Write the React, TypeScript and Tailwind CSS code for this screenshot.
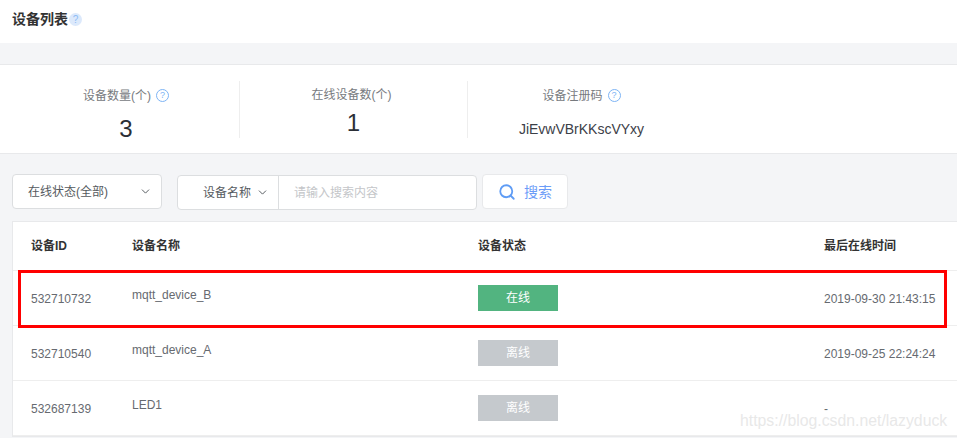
import React from 'react';
import { ChevronDown, Search } from 'lucide-react';

const rows = [
  { id: '532710732', name: 'mqtt_device_B', online: true, time: '2019-09-30 21:43:15' },
  { id: '532710540', name: 'mqtt_device_A', online: false, time: '2019-09-25 22:24:24' },
  { id: '532687139', name: 'LED1', online: false, time: '-' },
];

function Help() {
  return (
    <span className="flex h-[13px] w-[13px] items-center justify-center rounded-full border border-[#7db4f5] text-[9px] leading-none text-[#7db4f5]">
      ?
    </span>
  );
}

function Row({ id, name, online, time }: { id: string; name: string; online: boolean; time: string }) {
  return (
    <div className="flex h-[55px] items-center border-b border-[#eeeeee] pl-[18px] text-xs text-[#666a70]">
      <div className="w-[101px] pt-[2px]">{id}</div>
      <div className="w-[346px] pb-[7px]">{name}</div>
      <div className="w-[346px]">
        <div className={`flex h-[26px] w-20 items-center justify-center text-xs text-white ${online ? 'bg-[#52b480]' : 'bg-[#c5c9cd]'}`}>
          {online ? '在线' : '离线'}
        </div>
      </div>
      <div className="pt-[2px] whitespace-nowrap">{time}</div>
    </div>
  );
}

export default function App() {
  return (
    <div
      className="relative h-[438px] w-[957px] overflow-hidden bg-[#f4f5f7]"
      style={{ fontFamily: '"Liberation Sans", "Noto Sans CJK SC", sans-serif' }}
    >
      <div className="flex h-[43px] items-center gap-[1px] bg-white pb-[5px] pl-3">
        <span className="text-sm font-bold text-[#333333]">设备列表</span>
        <span className="flex h-[13px] w-[13px] items-center justify-center rounded-full bg-[#dce9fb] text-[10px] text-[#8dbcf5]">?</span>
      </div>

      <div className="mt-[21px] flex h-[90px] items-center border-y border-[#e8e9eb] bg-white">
        <div className="flex h-[57px] w-[240px] flex-col items-center border-r border-[#eeeeee]">
          <div className="flex items-center gap-[5px] pt-[7px] pl-[13px] text-xs text-[#777a7e]">
            设备数量(个) <Help />
          </div>
          <div className="mt-[10px] pl-[13px] text-[24px] leading-[30px] text-[#2b2f36]">3</div>
        </div>
        <div className="flex h-[57px] w-[228px] flex-col items-center border-r border-[#eeeeee]">
          <div className="pt-[6px] pr-[4px] text-xs text-[#777a7e]">在线设备数(个)</div>
          <div className="mt-[5px] text-[24px] leading-[30px] text-[#2b2f36]">1</div>
        </div>
        <div className="flex h-[57px] w-[227px] flex-col items-center">
          <div className="flex items-center gap-[5px] pt-[7px] text-xs text-[#777a7e]">
            设备注册码 <Help />
          </div>
          <div className="mt-[15px] text-sm leading-[20px] text-[#3c4048]">JiEvwVBrKKscVYxy</div>
        </div>
      </div>

      <div className="mt-[20px] flex items-start pl-3">
        <div className="flex h-[35px] w-[150px] items-center justify-between rounded-sm border border-[#dcdee0] bg-white pr-[9px] pl-[15px] text-xs text-[#555a60]">
          在线状态(全部)
          <ChevronDown size={13} strokeWidth={1.8} className="text-[#555a60]" />
        </div>
        <div className="mt-[1px] ml-[15px] flex h-[35px] w-[300px] rounded-sm border border-[#dcdee0] bg-white text-xs">
          <div className="flex w-[101px] items-center justify-end gap-[5px] border-r border-[#dcdee0] pr-[9px] text-[#555a60]">
            设备名称
            <ChevronDown size={13} strokeWidth={1.8} className="text-[#555a60]" />
          </div>
          <div className="flex items-center pl-[15px] text-[#c4c6c9]">请输入搜索内容</div>
        </div>
        <div className="ml-[5px] flex h-[35px] w-[86px] items-center justify-center gap-[8px] rounded-sm border border-[#e8e9eb] bg-white text-sm text-[#6c9cf8]">
          <Search size={18} strokeWidth={2.4} className="text-[#5f9cf5]" />
          搜索
        </div>
      </div>

      <div className="mt-[11px] ml-3 border border-r-0 border-[#e8e9eb] bg-white">
        <div className="flex h-[49px] items-center border-b border-[#eeeeee] pl-[18px] text-xs font-bold text-[#333333]">
          <div className="w-[101px]">设备ID</div>
          <div className="w-[346px]">设备名称</div>
          <div className="w-[346px]">设备状态</div>
          <div>最后在线时间</div>
        </div>
        {rows.map((r) => (
          <Row key={r.id} {...r} />
        ))}
      </div>

      {/* red highlight drawn over the first row */}
      <div className="absolute top-[270px] left-[18px] h-[58px] w-[929px] border-[3px] border-[#ff0000]" />
      {/* csdn watermark */}
      <div className="absolute top-[409px] left-[740px] text-[15.8px] whitespace-nowrap text-[#e2e2e2]/80">
        https://blog.csdn.net/lazyduck
      </div>
    </div>
  );
}
